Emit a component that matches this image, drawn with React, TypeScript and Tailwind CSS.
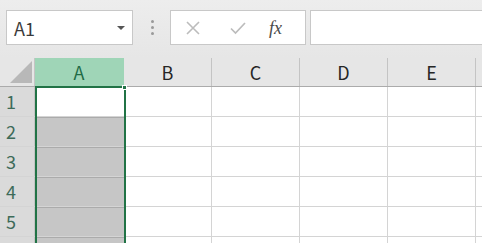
import React from "react"

const cols = ["A", "B", "C", "D", "E", ""]
const rows = [1, 2, 3, 4, 5, 6]

const font = { fontFamily: '"Noto Sans CJK JP", "Open Sans", sans-serif' }

export default function App() {
  return (
    <div className="h-[243px] w-[482px] overflow-hidden bg-white" style={font}>
      {/* formula bar */}
      <div className="flex h-[58px] items-start bg-gradient-to-b from-[#ededed] to-[#e6e6e6] pl-[6px] pt-[10px]">
        <div className="flex h-[35px] w-[127px] items-center justify-between border border-[#c8c8c8] bg-white pl-[7px] pr-[7px]">
          <span className="text-[18px] leading-none text-[#3a3a3a]">A1</span>
          <span className="mt-[1px] h-0 w-0 border-x-[4px] border-t-[4px] border-x-transparent border-t-[#555]" />
        </div>
        <div className="ml-[17px] mt-[10px] flex w-[4px] flex-col items-center gap-[3px]">
          <span className="h-[3px] w-[3px] rounded-full bg-[#9a9a9a]" />
          <span className="h-[3px] w-[3px] rounded-full bg-[#9a9a9a]" />
          <span className="h-[3px] w-[3px] rounded-full bg-[#9a9a9a]" />
        </div>
        <div className="ml-[16px] flex h-[35px] w-[136px] items-center border border-[#c8c8c8] bg-white">
          <svg width="16" height="16" viewBox="0 0 16 16" className="ml-[14px]">
            <path d="M2 2 L14 14 M14 2 L2 14" stroke="#bcbcbc" strokeWidth="1.6" fill="none" />
          </svg>
          <svg width="18" height="14" viewBox="0 0 18 14" className="ml-[28px]">
            <path d="M2 7.5 L6.5 12 L16 2" stroke="#bcbcbc" strokeWidth="1.7" fill="none" />
          </svg>
          <span
            className="ml-[22px] text-[18px] italic leading-none text-[#4a4a4a]"
            style={{ fontFamily: '"Liberation Serif", serif' }}
          >
            fx
          </span>
        </div>
        <div className="ml-[4px] h-[35px] flex-1 border border-r-0 border-[#c8c8c8] bg-white" />
      </div>

      {/* sheet */}
      <div className="relative">
        {/* column headers */}
        <div className="flex h-[29px] border-b border-[#ababab] bg-[#e6e6e6]">
          <div className="relative w-[35px] shrink-0 border-r border-[#c4c4c4]">
            <svg width="22" height="22" viewBox="0 0 22 22" className="absolute bottom-[3px] right-[2px]">
              <path d="M22 0 L22 22 L0 22 Z" fill="#b8b8b8" />
            </svg>
          </div>
          {cols.map((c, i) => (
            <div
              key={i}
              className={
                c === "A"
                  ? "flex w-[89px] shrink-0 items-center justify-center border-r border-[#9fd5b7] bg-[#9fd5b7] text-[18px] text-[#1e6b45]"
                  : "flex w-[88px] shrink-0 items-center justify-center border-r border-[#c4c4c4] text-[18px] text-[#262626]"
              }
            >
              {c}
            </div>
          ))}
        </div>

        {/* rows */}
        {rows.map((r) => (
          <div key={r} className="flex h-[30px] border-b border-[#d4d4d4]">
            <div className="flex w-[35px] shrink-0 items-center justify-center border-r border-[#c4c4c4] bg-[#dadada] pr-[12px] text-[18px] text-[#3d6b59]">
              {r < 6 ? r : ""}
            </div>
            <div
              className={
                r === 1 ? "w-[89px] shrink-0 bg-white" : "w-[89px] shrink-0 border-t border-[#ababab] bg-[#c6c6c6]"
              }
            />
            {cols.slice(1).map((c, i) => (
              <div key={i} className="w-[88px] shrink-0 border-r border-[#d4d4d4]" />
            ))}
          </div>
        ))}

        {/* selection outline */}
        <div className="absolute left-[35px] top-[28px] h-[200px] w-[91px] border-x-2 border-t-2 border-[#217346]" />
        <div className="absolute left-[122px] top-[27px] h-[5px] w-[5px] border border-white bg-[#217346]" />
      </div>
    </div>
  )
}
